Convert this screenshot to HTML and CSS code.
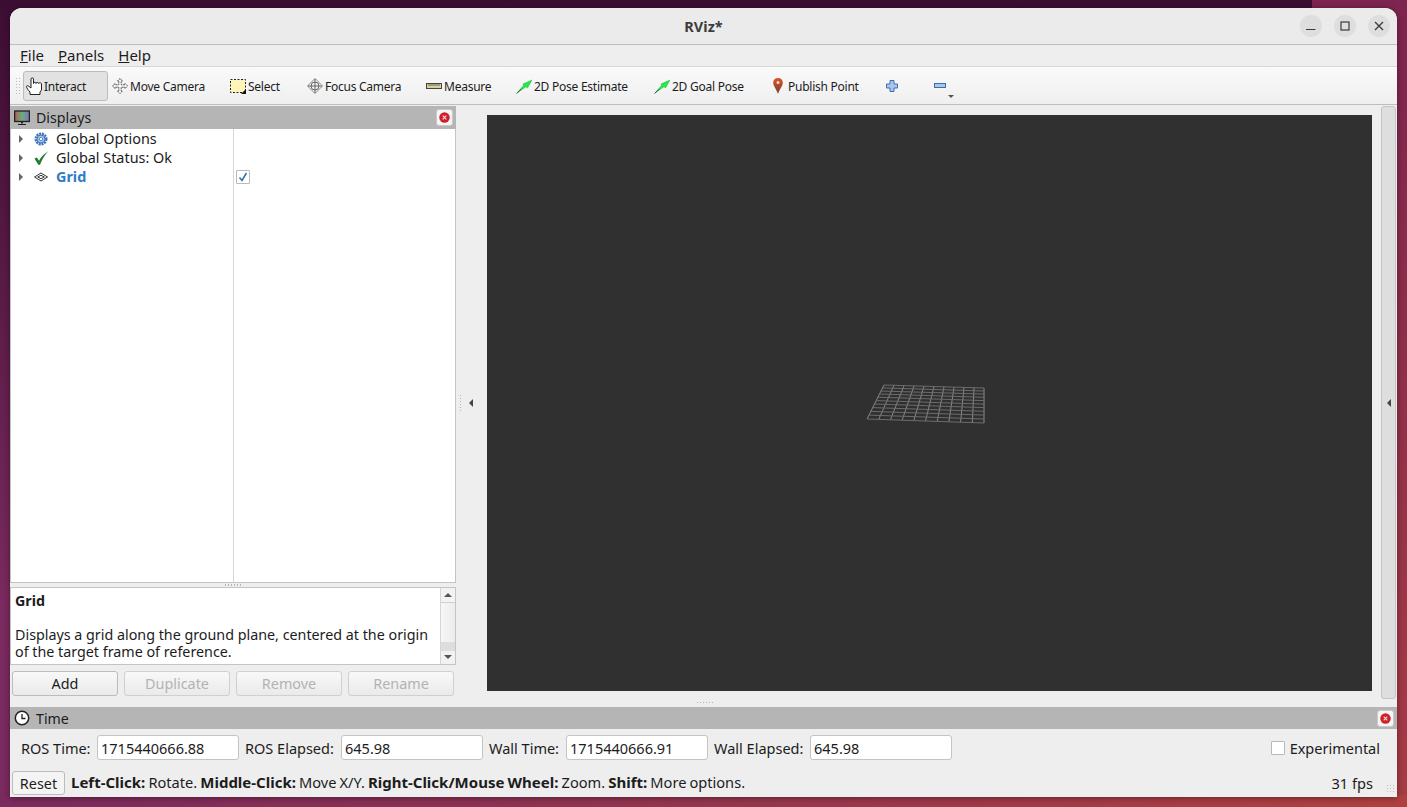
FILE: index.html
```html
<!DOCTYPE html>
<html>
  <head>
    <meta charset="utf-8">
    <title>RViz*</title>
    <link rel="stylesheet" href="styles.css">
  </head>
  <body>
    <div class="window">
      <header class="titlebar">
        <span class="title">RViz*</span>
        <div class="win-buttons">
          <button class="win-btn"><svg width="12" height="12" viewBox="0 0 12 12"><path d="M1 9.500h9.500" stroke="#3a3a3a" stroke-width="1.200"/></svg></button>
          <button class="win-btn"><svg width="12" height="12" viewBox="0 0 12 12"><rect x="2" y="2" width="8" height="8" fill="none" stroke="#3a3a3a" stroke-width="1.200"/></svg></button>
          <button class="win-btn"><svg width="12" height="12" viewBox="0 0 12 12"><path d="M2 2l8 8M10 2l-8 8" stroke="#3a3a3a" stroke-width="1.300"/></svg></button>
        </div>
      </header>

      <nav class="menubar">
        <span class="menu-item"><u>F</u>ile</span>
        <span class="menu-item"><u>P</u>anels</span>
        <span class="menu-item"><u>H</u>elp</span>
      </nav>

      <div class="toolbar">
        <div class="grip"></div>
        <div class="tools">
          <div class="tool tool-active">
            <svg class="icon icon-hand" viewBox="0 0 16 18"><path d="M4 17.500V15C2.500 13.500.5 11 .5 9.500c0-1 1.500-1 2.500 0L5 11V2c0-1.500 2.500-1.500 2.500 0v4.500C7.500 5 10 5 10 6.500 10 5 12.500 5 12.500 6.500c0-1 3-1 3 .5v6L14 15v2.500z" fill="#fff" stroke="#222"/></svg>
            <span>Interact</span>
          </div>
          <div class="tool">
            <svg class="icon" viewBox="0 0 16 16"><path d="M8 .5l2.500 2.500H9.200v3.800H13V5.500L15.500 8 13 10.500V9.200H9.200V13h1.300L8 15.500 5.500 13h1.300V9.200H3v1.300L.5 8 3 5.500v1.300h3.800V3H5.500z" fill="#fff" stroke="#555" stroke-dasharray="2 .6"/></svg>
            <span>Move Camera</span>
          </div>
          <div class="tool">
            <svg class="icon" viewBox="0 0 16 16"><rect x=".5" y="1.500" width="15" height="13" fill="#fdf6b8" stroke="#222" stroke-dasharray="2 1.500"/><path d="M16 11v5h-5z" fill="#111"/></svg>
            <span>Select</span>
          </div>
          <div class="tool">
            <svg class="icon" viewBox="0 0 16 16"><g fill="none" stroke="#666"><path d="M8 .5L15.500 8 8 15.500.5 8z" stroke-dasharray="2 .8"/><circle cx="8" cy="8" r="4"/><path d="M8 1v14M1 8h14"/></g></svg>
            <span>Focus Camera</span>
          </div>
          <div class="tool">
            <svg class="icon" viewBox="0 0 16 16"><rect x=".5" y="5.500" width="15" height="5" fill="#d8cf9a" stroke="#444"/><path d="M3 6v2M5 6v2M7 6v2M9 6v2M11 6v2M13 6v2" stroke="#666"/></svg>
            <span>Measure</span>
          </div>
          <div class="tool">
            <svg class="icon" viewBox="0 0 16 16"><path d="M16 2l-4.500 8L10 8.700 1.500 14.500l6-7L7 6z" fill="#22ee44" stroke="#169a35" stroke-width=".4"/><path d="M.5 15.500l5-4.500" stroke="#176b2c"/></svg>
            <span>2D Pose Estimate</span>
          </div>
          <div class="tool">
            <svg class="icon" viewBox="0 0 16 16"><path d="M16 2l-4.500 8L10 8.700 1.500 14.500l6-7L7 6z" fill="#22ee44" stroke="#169a35" stroke-width=".4"/><path d="M.5 15.500l5-4.500" stroke="#176b2c"/></svg>
            <span>2D Goal Pose</span>
          </div>
          <div class="tool">
            <svg class="icon" viewBox="0 0 16 16"><defs><linearGradient id="pin" x1="0" y1="0" x2="0" y2="1"><stop offset="0" stop-color="#e2502c"/><stop offset="1" stop-color="#6a4526"/></linearGradient></defs><path d="M8 0C5.200 0 3.200 2 3.200 4.700 3.200 8 6.500 11 8 16c1.500-5 4.800-8 4.800-11.300C12.800 2 10.800 0 8 0z" fill="url(#pin)"/><circle cx="8" cy="4.500" r="1.500" fill="#f7d9c8"/></svg>
            <span>Publish Point</span>
          </div>
          <div class="tool tool-small">
            <svg class="icon" viewBox="0 0 16 16"><path d="M6 2.500h4V6h3.500v4H10v3.500H6V10H2.500V6H6z" fill="#a9c6ea" stroke="#3d6fb0"/></svg>
          </div>
          <div class="tool tool-small">
            <svg class="icon" viewBox="0 0 16 16"><rect x="2.500" y="5.500" width="11" height="4" fill="#a9c6ea" stroke="#3d6fb0"/></svg>
            <i class="menu-arrow"></i>
          </div>
        </div>
      </div>

      <div class="main">
        <section class="left-panel">
          <div class="dock-title">
            <svg class="dock-icon" viewBox="0 0 16 16"><defs><linearGradient id="screen" x1="0" y1="0" x2="1" y2="0"><stop offset="0" stop-color="#b05a5a"/><stop offset=".5" stop-color="#6cae78"/><stop offset="1" stop-color="#7a72c8"/></linearGradient></defs><rect x=".6" y="1" width="14.800" height="10.500" fill="url(#screen)" stroke="#222" stroke-width="1.300"/><path d="M7 12h2v1.500H7zM4 14h8v1H4z" fill="#222"/></svg>
            <span class="dock-name">Displays</span>
            <span class="dock-close"><svg width="11" height="11" viewBox="0 0 11 11"><circle cx="5.500" cy="5.500" r="5.200" fill="#cf1f2a"/><path d="M3.700 3.700l3.600 3.600M7.300 3.700L3.700 7.300" stroke="#f6d5d5" stroke-width="1.200"/></svg></span>
          </div>
          <div class="tree">
            <div class="tree-names">
              <div class="tree-row">
                <i class="branch"></i>
                <svg class="tree-icon" viewBox="0 0 14 14"><circle cx="7" cy="7" r="5.300" fill="none" stroke="#3f74c0" stroke-width="2.400" stroke-dasharray="2 .8"/><circle cx="7" cy="7" r="4" fill="#a9c4ea" stroke="#3f74c0"/><circle cx="7" cy="7" r="1.700" fill="#fff" stroke="#3f74c0" stroke-width=".8"/></svg>
                <span>Global Options</span>
              </div>
              <div class="tree-row">
                <i class="branch"></i>
                <svg class="tree-icon" viewBox="0 0 14 14"><path d="M.5 7.500l2.300-1 2.300 3.300C7 6 9.700 3 14 .5 10.700 4 8 8.500 6 13.800H4.300z" fill="#1f7a2c"/></svg>
                <span>Global Status: Ok</span>
              </div>
              <div class="tree-row">
                <i class="branch"></i>
                <svg class="tree-icon" viewBox="0 0 14 14"><g fill="#fff" stroke="#333"><path d="M7 3L13.500 7 7 11 .5 7z"/><path d="M7 5.300L10.300 7 7 8.700 3.700 7z"/></g></svg>
                <span class="tree-selected">Grid</span>
              </div>
            </div>
            <div class="tree-values">
              <div class="tree-row"></div>
              <div class="tree-row"></div>
              <div class="tree-row">
                <span class="check"><svg width="10" height="10" viewBox="0 0 10 10"><path d="M1.500 5.500L4 8.500 8.500 1" fill="none" stroke="#2a6db0" stroke-width="1.500"/></svg></span>
              </div>
            </div>
          </div>
          <div class="split-dots split-h"></div>
          <div class="desc">
            <div class="desc-text">
              <b>Grid</b>
              <p>Displays a grid along the ground plane, centered at the origin of the target frame of reference.</p>
            </div>
            <div class="vscroll">
              <i class="arrow-up"></i>
              <div class="vscroll-thumb"></div>
              <div class="vscroll-end"></div>
              <i class="arrow-down"></i>
            </div>
          </div>
          <div class="panel-buttons">
            <button class="btn">Add</button>
            <button class="btn" disabled>Duplicate</button>
            <button class="btn" disabled>Remove</button>
            <button class="btn" disabled>Rename</button>
          </div>
        </section>

        <div class="collapse-left">
          <div class="split-dots split-v"></div>
          <i class="arrow-left"></i>
        </div>

        <div class="viewport">
          <svg class="scene" viewBox="487 115 885 576">
            <path d="M884 385L867 419M894 385.300L878.700 419.400M904 385.600L890.400 419.800M914 385.900L902.100 420.200M924 386.200L913.800 420.600M934 386.500L925.500 421M944 386.800L937.200 421.400M954 387.100L948.900 421.800M964 387.400L960.600 422.200M974 387.700L972.300 422.600M984 388L984 423" fill="none" stroke="#8a8a8a"/>
            <path d="M884 385L984 388M882.600 387.900L984 391M881 391L984 394.100M879.500 394L984 397.300M877.900 397.200L984 400.600M876.200 400.600L984 404.100M874.500 404L984 407.600M872.700 407.600L984 411.300M870.800 411.400L984 415.100M869 415.100L984 419M867 419L984 423" fill="none" stroke="#6c6c6c"/>
          </svg>
        </div>

        <div class="collapse-right"><i class="arrow-right"></i></div>
      </div>

      <div class="split-dots split-bottom"></div>

      <section class="time-panel">
        <div class="dock-title">
          <svg class="dock-icon" viewBox="0 0 16 16"><circle cx="8" cy="8" r="6.700" fill="#fff" stroke="#222" stroke-width="1.500"/><path d="M8 4v4.500h3.500" fill="none" stroke="#222" stroke-width="1.300"/></svg>
          <span class="dock-name">Time</span>
          <span class="dock-close"><svg width="11" height="11" viewBox="0 0 11 11"><circle cx="5.500" cy="5.500" r="5.200" fill="#cf1f2a"/><path d="M3.700 3.700l3.600 3.600M7.300 3.700L3.700 7.300" stroke="#f6d5d5" stroke-width="1.200"/></svg></span>
        </div>
        <div class="time-row">
          <label class="field field-ros">ROS Time:<input value="1715440666.88"></label>
          <label class="field field-long">ROS Elapsed:<input value="645.98"></label>
          <label class="field field-wall">Wall Time:<input value="1715440666.91"></label>
          <label class="field field-long">Wall Elapsed:<input value="645.98"></label>
          <label class="experimental"><span class="check check-off"></span>Experimental</label>
        </div>
      </section>

      <footer class="statusbar">
        <button class="btn btn-reset">Reset</button>
        <span class="status-text"><b>Left-Click:</b> Rotate. <b>Middle-Click:</b> Move X/Y. <b>Right-Click/Mouse Wheel:</b> Zoom. <b>Shift:</b> More options.</span>
        <span class="fps">31 fps</span>
        <div class="size-grip"></div>
      </footer>
    </div>
  </body>
</html>
```

FILE: styles.css
```css
/* Desktop behind the window, only its edges show */
html, body {
  height: 100%;
}

body {
  margin: 0;
  padding: 8px 10px 0;
  box-sizing: border-box;
  overflow: hidden;
  background:
    linear-gradient(90deg, #7a2a5e, #b04040) left bottom / 100% 12px no-repeat,
    linear-gradient(#3c0d33, #7a2a5e 75%) left top / 1312px 100% no-repeat,
    linear-gradient(#7d2450, #a83c44);
  font-family: "Noto Sans", sans-serif;
  font-size: 14.4px;
  color: #1c1c1c;
}

.window {
  width: 1387px;
  height: 789px;
  display: flex;
  flex-direction: column;
  background-color: #eeeeee;
  border-radius: 12px 12px 0 0;
  overflow: hidden;
  box-shadow: 0 1px 6px rgba(0, 0, 0, 0.4);
}

/* Title bar */
.titlebar {
  height: 36px;
  flex: none;
  position: relative;
  display: flex;
  align-items: center;
  justify-content: center;
  background-color: #ebebeb;
  border-bottom: 1px solid #bdbdbd;
}

.title {
  font-weight: bold;
  font-size: 14.5px;
  color: #3d3d3d;
}

.win-buttons {
  position: absolute;
  right: 7px;
  top: 7px;
  display: flex;
  gap: 12px;
}

.win-btn {
  width: 22px;
  height: 22px;
  padding: 0;
  border: none;
  border-radius: 50%;
  background-color: #dedede;
  display: flex;
  align-items: center;
  justify-content: center;
}

/* Menu */
.menubar {
  height: 21px;
  box-sizing: content-box;
  flex: none;
  display: flex;
  align-items: flex-start;
  gap: 14px;
  padding-left: 10px;
  font-size: 15px;
  line-height: 21px;
  border-bottom: 1px solid #d6d6d6;
}

/* Toolbar */
.toolbar {
  height: 37px;
  flex: none;
  display: flex;
  align-items: center;
  background: linear-gradient(#fafafa, #efefef);
  border-bottom: 1px solid #bdbdbd;
}

.grip {
  width: 5px;
  height: 17px;
  margin: 0 3px 0 5px;
  flex: none;
  background-image: radial-gradient(#bbbbbb 1px, transparent 1px);
  background-size: 3px 3px;
}

.tools {
  display: grid;
  grid-template-columns: 86px 118px 77px 119px 90px 138px 116px 115px 48px 48px;
  align-items: center;
}

.tool {
  height: 30px;
  display: flex;
  align-items: center;
  gap: 2px;
  padding-left: 3px;
  box-sizing: border-box;
  font-size: 12px;
  letter-spacing: -0.25px;
  position: relative;
}

.tool span {
  margin-top: 1px;
}

.tool-small {
  padding-left: 2px;
}

.tool-active {
  width: 85px;
  background-color: #e2e2e2;
  border: 1px solid #bcbcbc;
  border-radius: 3px;
  padding-left: 2px;
}

.icon {
  width: 16px;
  height: 16px;
  flex: none;
}

.icon-hand {
  height: 18px;
}

.menu-arrow {
  position: absolute;
  left: 18px;
  bottom: 3px;
  border: 3px solid transparent;
  border-top: 3px solid #555555;
  border-bottom: none;
}

/* Main area */
.main {
  height: 600px;
  flex: none;
  display: flex;
}

.left-panel {
  width: 446px;
  flex: none;
  padding-top: 1px;
  display: flex;
  flex-direction: column;
}

.dock-title {
  height: 23px;
  flex: none;
  display: flex;
  align-items: center;
  padding: 0 3px 0 4px;
  background-color: #b5b5b5;
  font-size: 14.2px;
}

.dock-icon {
  width: 16px;
  height: 16px;
  margin-right: 6px;
  flex: none;
}

.dock-name {
  flex: 1;
}

.dock-close {
  width: 17px;
  height: 17px;
  box-sizing: border-box;
  display: flex;
  align-items: center;
  justify-content: center;
  background-color: #f5f5f5;
  border: 1px solid #c9c9c9;
  border-radius: 3px;
}

/* Displays tree */
.tree {
  height: 453px;
  flex: none;
  display: flex;
  background-color: #ffffff;
  border: 1px solid #c4c4c4;
  border-top: none;
}

.tree-names {
  width: 222px;
  flex: none;
  border-right: 1px solid #d6d6d6;
}

.tree-values {
  flex: 1;
}

.tree-row {
  height: 19px;
  display: flex;
  align-items: center;
}

.branch {
  width: 0;
  height: 0;
  margin-left: 8px;
  margin-right: 11px;
  border-left: 4px solid #666666;
  border-top: 4px solid transparent;
  border-bottom: 4px solid transparent;
}

.tree-icon {
  width: 14px;
  height: 14px;
  margin-right: 8px;
  flex: none;
}

.tree-selected {
  font-weight: bold;
  color: #2f7bc8;
}

.check {
  width: 14px;
  height: 14px;
  margin-left: 2px;
  box-sizing: border-box;
  display: flex;
  align-items: center;
  justify-content: center;
  background-color: #ffffff;
  border: 1px solid #b9b9b9;
  border-radius: 1px;
}

/* Splitter handles */
.split-dots {
  flex: none;
  background-image: radial-gradient(#b4b4b4 0.7px, transparent 1px);
  background-size: 3px 3px;
}

.split-h {
  width: 18px;
  height: 4px;
  margin: 0 auto;
  background-size: 3px 4px;
}

.split-v {
  width: 3px;
  height: 18px;
  margin-left: 3px;
}

.split-bottom {
  width: 18px;
  height: 3px;
  margin: -4px 0 1px 686px;
  position: relative;
}

/* Description box */
.desc {
  height: 78px;
  flex: none;
  display: flex;
  background-color: #ffffff;
  border: 1px solid #c4c4c4;
  box-sizing: border-box;
}

.desc-text {
  flex: 1;
  padding: 4px 4px 0 4px;
  font-size: 14.3px;
  line-height: 17px;
}

.desc-text p {
  margin: 17px 0 0;
}

.vscroll {
  width: 14px;
  flex: none;
  display: flex;
  flex-direction: column;
  align-items: center;
  border-left: 1px solid #d6d6d6;
  background-color: #f2f2f2;
}

.vscroll-thumb {
  flex: 1;
  width: 100%;
  margin-top: 5px;
  background: linear-gradient(90deg, #f6f6f6, #ececec);
  border-top: 1px solid #d0d0d0;
}

.vscroll-end {
  width: 100%;
  height: 9px;
  background-color: #dddddd;
  margin-bottom: 4px;
}

.arrow-up {
  margin-top: 5px;
  border-left: 4px solid transparent;
  border-right: 4px solid transparent;
  border-bottom: 4px solid #555555;
}

.arrow-down {
  margin-bottom: 5px;
  border-left: 4px solid transparent;
  border-right: 4px solid transparent;
  border-top: 4px solid #555555;
}

/* Buttons */
.panel-buttons {
  display: flex;
  gap: 6px;
  margin: 6px 0 0 2px;
}

.btn {
  width: 106px;
  height: 25px;
  padding: 0;
  font-family: inherit;
  font-size: 14.4px;
  color: #1c1c1c;
  background: linear-gradient(#f8f8f8, #eaeaea);
  border: 1px solid #bcbcbc;
  border-radius: 3px;
}

.btn:disabled {
  color: #b3b3b3;
  border-color: #d0d0d0;
}

/* Collapse handles either side of the 3D view */
.collapse-left {
  width: 31px;
  flex: none;
  display: flex;
  align-items: center;
  gap: 7px;
  box-sizing: border-box;
  padding-bottom: 5px;
}

.arrow-left {
  border-top: 4px solid transparent;
  border-bottom: 4px solid transparent;
  border-right: 4px solid #444444;
}

.viewport {
  width: 885px;
  height: 576px;
  margin-top: 10px;
  flex: none;
  background-color: #303030;
}

.scene {
  display: block;
  width: 885px;
  height: 576px;
}

.collapse-right {
  width: 15px;
  height: 593px;
  margin: 1px 0 0 9px;
  flex: none;
  box-sizing: border-box;
  display: flex;
  align-items: center;
  justify-content: center;
  background-color: #dedede;
  border: 1px solid #c4c4c4;
  border-radius: 3px;
}

.arrow-right {
  border-top: 4px solid transparent;
  border-bottom: 4px solid transparent;
  border-right: 4px solid #444444;
}

/* Time panel */
.time-panel {
  flex: none;
  margin-top: 2px;
}

.time-panel .dock-title {
  height: 22px;
}

.time-row {
  height: 25px;
  margin-top: 6px;
  padding-left: 11px;
  padding-right: 17px;
  display: flex;
  align-items: center;
  gap: 6px;
  font-size: 14.5px;
}

.field {
  display: flex;
  align-items: center;
  justify-content: space-between;
}

.field-ros {
  width: 218px;
}

.field-wall {
  width: 219px;
}

.field-long {
  width: 238px;
}

.field input {
  width: 142px;
  height: 25px;
  box-sizing: border-box;
  padding: 0 3px;
  font-family: inherit;
  font-size: 14.5px;
  color: #1c1c1c;
  background-color: #ffffff;
  border: 1px solid #c4c4c4;
  border-radius: 3px;
  outline: none;
}

.experimental {
  margin-left: auto;
  display: flex;
  align-items: center;
  gap: 5px;
}

.check-off {
  margin-left: 0;
}

/* Status bar */
.statusbar {
  height: 24px;
  margin-top: 11px;
  padding: 0 24px 0 2px;
  flex: none;
  position: relative;
  display: flex;
  align-items: center;
  font-size: 14.6px;
}

.btn-reset {
  width: 53px;
  height: 24px;
  background: #f4f4f4;
}

.status-text {
  margin: -2px 0 0 6px;
  flex: 1;
  word-spacing: -0.7px;
}

.status-text b {
  font-size: 15px;
}

.size-grip {
  position: absolute;
  right: 1px;
  bottom: 1px;
  width: 10px;
  height: 10px;
  background-image: radial-gradient(#bdbdbd 0.7px, transparent 1px);
  background-size: 3px 3px;
}
```
